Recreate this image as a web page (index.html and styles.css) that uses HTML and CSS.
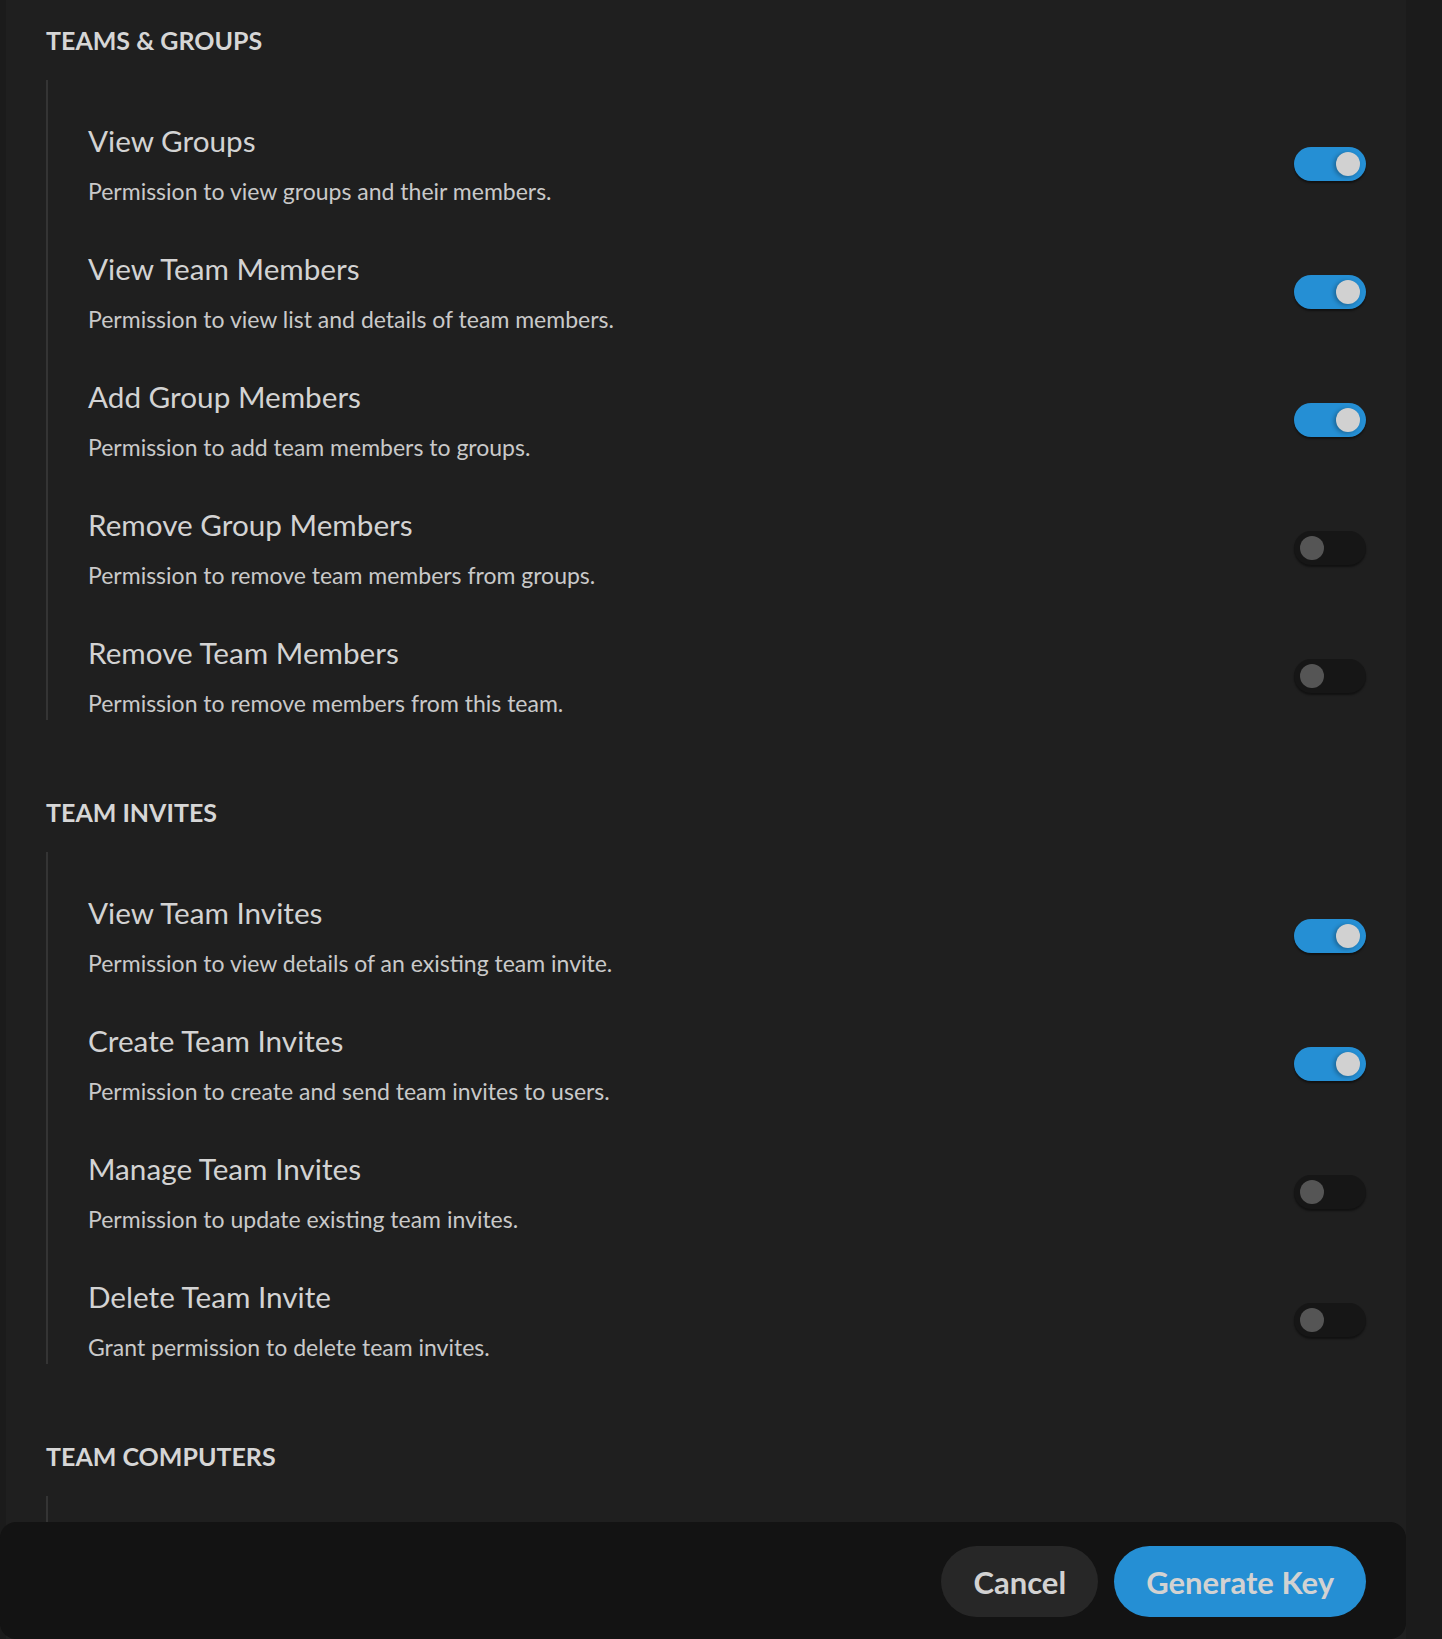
FILE: index.html
```html
<!DOCTYPE html>
<html lang="en">
<head>
<meta charset="utf-8">
<title>Generate Key – Permissions</title>
<link rel="stylesheet" href="styles.css">
</head>
<body>
<div class="page">
  <main class="panel">
    <section class="group">
      <h2 class="group-title">TEAMS &amp; GROUPS</h2>
      <ul class="perm-list">
        <li class="perm">
          <div class="perm-text"><div class="perm-name">View Groups</div><div class="perm-desc">Permission to view groups and their members.</div></div>
          <span class="switch is-on"><span class="knob"></span></span>
        </li>
        <li class="perm">
          <div class="perm-text"><div class="perm-name">View Team Members</div><div class="perm-desc">Permission to view list and details of team members.</div></div>
          <span class="switch is-on"><span class="knob"></span></span>
        </li>
        <li class="perm">
          <div class="perm-text"><div class="perm-name">Add Group Members</div><div class="perm-desc">Permission to add team members to groups.</div></div>
          <span class="switch is-on"><span class="knob"></span></span>
        </li>
        <li class="perm">
          <div class="perm-text"><div class="perm-name">Remove Group Members</div><div class="perm-desc">Permission to remove team members from groups.</div></div>
          <span class="switch"><span class="knob"></span></span>
        </li>
        <li class="perm">
          <div class="perm-text"><div class="perm-name">Remove Team Members</div><div class="perm-desc">Permission to remove members from this team.</div></div>
          <span class="switch"><span class="knob"></span></span>
        </li>
      </ul>
    </section>
    <section class="group">
      <h2 class="group-title">TEAM INVITES</h2>
      <ul class="perm-list">
        <li class="perm">
          <div class="perm-text"><div class="perm-name">View Team Invites</div><div class="perm-desc">Permission to view details of an existing team invite.</div></div>
          <span class="switch is-on"><span class="knob"></span></span>
        </li>
        <li class="perm">
          <div class="perm-text"><div class="perm-name">Create Team Invites</div><div class="perm-desc">Permission to create and send team invites to users.</div></div>
          <span class="switch is-on"><span class="knob"></span></span>
        </li>
        <li class="perm">
          <div class="perm-text"><div class="perm-name">Manage Team Invites</div><div class="perm-desc">Permission to update existing team invites.</div></div>
          <span class="switch"><span class="knob"></span></span>
        </li>
        <li class="perm">
          <div class="perm-text"><div class="perm-name">Delete Team Invite</div><div class="perm-desc">Grant permission to delete team invites.</div></div>
          <span class="switch"><span class="knob"></span></span>
        </li>
      </ul>
    </section>
    <section class="group">
      <h2 class="group-title">TEAM COMPUTERS</h2>
      <ul class="perm-list">
        <li class="perm">
          <div class="perm-text"><div class="perm-name">View Computers</div><div class="perm-desc">Permission to view the team's computers.</div></div>
          <span class="switch"><span class="knob"></span></span>
        </li>
      </ul>
    </section>
  </main>
  <footer class="actions">
    <button class="btn btn-cancel" type="button">Cancel</button>
    <button class="btn btn-primary" type="button">Generate Key</button>
  </footer>
</div>
</body>
</html>
```

FILE: styles.css
```css
html, body {
  margin: 0;
  padding: 0;
  height: 100%;
  overflow: hidden;
}

body {
  background: #1b1b1b;
  font-family: Lato, "Liberation Sans", sans-serif;
  color: #d2d2d2;
}

.page {
  height: 100vh;
}

.panel {
  margin-left: 6px;
  width: 1400px;
  height: 100vh;
  box-sizing: border-box;
  padding: 24px 40px 0 40px;
  background: #1f1f1f;
  overflow: hidden;
}

.group {
  margin-bottom: 76px;
}

.group-title {
  margin: 0 0 24px 0;
  font-size: 25px;
  line-height: 32px;
  font-weight: 700;
  color: #d6d6d6;
}

.perm-list {
  list-style: none;
  margin: 0;
  padding: 0 0 0 40px;
  border-left: 2px solid #343434;
}

.perm {
  display: flex;
  align-items: center;
  justify-content: space-between;
  padding: 41px 0 2px 0;
}

.perm-text {
  display: flex;
  flex-direction: column;
  gap: 17px;
}

.perm-name {
  font-size: 29.7px;
  line-height: 38px;
  color: #d3d3d3;
  padding-top: 1px;
  margin-bottom: -1px;
}

.perm-desc {
  font-size: 23px;
  line-height: 30px;
  color: #c9c9c9;
}

.switch {
  display: flex;
  align-items: center;
  justify-content: flex-start;
  box-sizing: border-box;
  width: 72px;
  height: 34px;
  padding: 0 6px;
  border-radius: 17px;
  background: #161616;
  box-shadow: 0 2px 2px rgba(0, 0, 0, 0.45);
}

.switch .knob {
  width: 24px;
  height: 24px;
  border-radius: 50%;
  background: #555555;
}

.switch.is-on {
  justify-content: flex-end;
  background: #258fd4;
}

.switch.is-on .knob {
  background: #d1d1d1;
  box-shadow: -2px 1px 4px rgba(0, 0, 0, 0.3);
}

.actions {
  position: fixed;
  left: 0;
  bottom: 0;
  width: 1406px;
  height: 117px;
  box-sizing: border-box;
  padding: 24px 40px 0 0;
  display: flex;
  justify-content: flex-end;
  align-items: flex-start;
  gap: 16px;
  background: #131313;
  border-radius: 16px;
}

.btn {
  height: 71px;
  padding: 0 32px;
  border: none;
  border-radius: 36px;
  font-family: Lato, "Liberation Sans", sans-serif;
  font-size: 31px;
  font-weight: 700;
  color: #d2d2d2;
  cursor: pointer;
}

.btn-cancel {
  background: #272727;
}

.btn-primary {
  background: #258fd4;
}
```
